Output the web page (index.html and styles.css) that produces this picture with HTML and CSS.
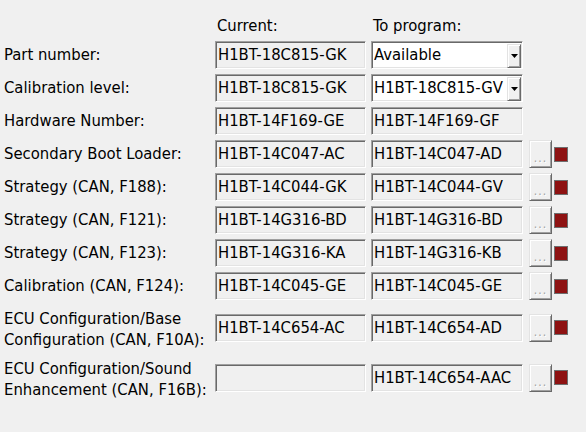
FILE: index.html
```html
<!DOCTYPE html>
<html>
<head>
<meta charset="utf-8">
<link rel="stylesheet" href="styles.css">
</head>
<body>
<div class="form">
  <div class="row head-row">
    <span></span>
    <span class="head">Current:</span>
    <span class="head">To program:</span>
  </div>

  <div class="row">
    <span class="label">Part number:</span>
    <span class="cell"><span class="field">H1BT-18C815-GK</span></span>
    <span class="cell"><span class="field combo"><span class="combo-text">Available</span><span class="arrow"><svg width="7" height="4" viewBox="0 0 7 4"><polygon points="0,0 7,0 3.5,4" fill="#000"/></svg></span></span></span>
  </div>

  <div class="row">
    <span class="label">Calibration level:</span>
    <span class="cell"><span class="field">H1BT-18C815-GK</span></span>
    <span class="cell"><span class="field combo"><span class="combo-text">H1BT-18C815-GV</span><span class="arrow"><svg width="7" height="4" viewBox="0 0 7 4"><polygon points="0,0 7,0 3.5,4" fill="#000"/></svg></span></span></span>
  </div>

  <div class="row">
    <span class="label">Hardware Number:</span>
    <span class="cell"><span class="field">H1BT-14F169-GE</span></span>
    <span class="cell"><span class="field wide">H1BT-14F169-GF</span></span>
  </div>

  <div class="row">
    <span class="label">Secondary Boot Loader:</span>
    <span class="cell"><span class="field">H1BT-14C047-AC</span></span>
    <span class="cell"><span class="field wide">H1BT-14C047-AD</span></span>
    <span class="cell"><span class="more">...</span></span>
    <span class="cell"><span class="flag"></span></span>
  </div>

  <div class="row">
    <span class="label">Strategy (CAN, F188):</span>
    <span class="cell"><span class="field">H1BT-14C044-GK</span></span>
    <span class="cell"><span class="field wide">H1BT-14C044-GV</span></span>
    <span class="cell"><span class="more">...</span></span>
    <span class="cell"><span class="flag"></span></span>
  </div>

  <div class="row">
    <span class="label">Strategy (CAN, F121):</span>
    <span class="cell"><span class="field">H1BT-14G316-BD</span></span>
    <span class="cell"><span class="field wide">H1BT-14G316-BD</span></span>
    <span class="cell"><span class="more">...</span></span>
    <span class="cell"><span class="flag"></span></span>
  </div>

  <div class="row">
    <span class="label">Strategy (CAN, F123):</span>
    <span class="cell"><span class="field">H1BT-14G316-KA</span></span>
    <span class="cell"><span class="field wide">H1BT-14G316-KB</span></span>
    <span class="cell"><span class="more">...</span></span>
    <span class="cell"><span class="flag"></span></span>
  </div>

  <div class="row">
    <span class="label">Calibration (CAN, F124):</span>
    <span class="cell"><span class="field">H1BT-14C045-GE</span></span>
    <span class="cell"><span class="field wide">H1BT-14C045-GE</span></span>
    <span class="cell"><span class="more">...</span></span>
    <span class="cell"><span class="flag"></span></span>
  </div>

  <div class="row">
    <span class="label two">ECU Configuration/Base<br>Configuration (CAN, F10A):</span>
    <span class="cell"><span class="field">H1BT-14C654-AC</span></span>
    <span class="cell"><span class="field wide">H1BT-14C654-AD</span></span>
    <span class="cell"><span class="more">...</span></span>
    <span class="cell"><span class="flag"></span></span>
  </div>

  <div class="row">
    <span class="label two">ECU Configuration/Sound<br>Enhancement (CAN, F16B):</span>
    <span class="cell"><span class="field"></span></span>
    <span class="cell"><span class="field wide">H1BT-14C654-AAC</span></span>
    <span class="cell"><span class="more">...</span></span>
    <span class="cell"><span class="flag"></span></span>
  </div>
</div>
</body>
</html>
```

FILE: styles.css
```css
html, body {
  margin: 0;
  padding: 0;
  background: #f0f0f0;
}

body {
  font-family: "DejaVu Sans Condensed", "DejaVu Sans", sans-serif;
  font-stretch: condensed;
  font-size: 16.5px;
  color: #000;
  width: 586px;
  height: 432px;
  overflow: hidden;
}

.form {
  display: flex;
  flex-direction: column;
  gap: 5px;
  padding: 16px 0 0 4px;
}

.row {
  display: grid;
  grid-template-columns: 211px 156px 158px 25px 14px;
  align-items: center;
  line-height: 20px;
}

.head-row {
  height: 20px;
}

.head {
  padding-left: 2px;
}

.label {
  white-space: nowrap;
}

.label.two {
  line-height: 21px;
  padding-top: 3px;
}

.cell {
  display: flex;
  align-items: center;
}

.field {
  box-sizing: border-box;
  display: flex;
  align-items: center;
  width: 151px;
  height: 28px;
  padding-left: 2px;
  border-top: 1px solid #a0a0a0;
  border-left: 1px solid #a0a0a0;
  border-right: 1px solid #ffffff;
  border-bottom: 1px solid #ffffff;
  box-shadow: inset 1px 1px 0 #696969, inset -1px -1px 0 #e3e3e3;
  background: #f0f0f0;
  white-space: nowrap;
  overflow: hidden;
}

.field.wide {
  width: 152px;
}

.combo {
  width: 152px;
  background: #ffffff;
  padding-right: 1px;
}

.combo-text {
  flex: 1 1 auto;
  min-width: 0;
  overflow: hidden;
}

.arrow {
  box-sizing: border-box;
  flex: 0 0 14px;
  width: 14px;
  height: 24px;
  margin-top: 1px;
  display: flex;
  align-items: center;
  justify-content: center;
  background: #f0f0f0;
  border-top: 1px solid #e3e3e3;
  border-left: 1px solid #e3e3e3;
  border-right: 1px solid #696969;
  border-bottom: 1px solid #696969;
  box-shadow: inset 1px 1px 0 #ffffff, inset -1px -1px 0 #a0a0a0;
}

.arrow svg {
  display: block;
}

.more {
  box-sizing: border-box;
  width: 23px;
  height: 28px;
  display: flex;
  align-items: flex-end;
  justify-content: center;
  padding-bottom: 3px;
  background: #f0f0f0;
  border-top: 1px solid #e3e3e3;
  border-left: 1px solid #e3e3e3;
  border-right: 1px solid #696969;
  border-bottom: 1px solid #696969;
  box-shadow: inset 1px 1px 0 #ffffff, inset -1px -1px 0 #a0a0a0;
  color: #a0a0a0;
  text-shadow: 1px 1px 0 #ffffff;
  font-size: 12px;
  line-height: 12px;
  letter-spacing: 1px;
}

.flag {
  box-sizing: border-box;
  display: block;
  width: 14px;
  height: 15px;
  background: #8e1212;
  border: 1px solid #6e6e6e;
}
```
